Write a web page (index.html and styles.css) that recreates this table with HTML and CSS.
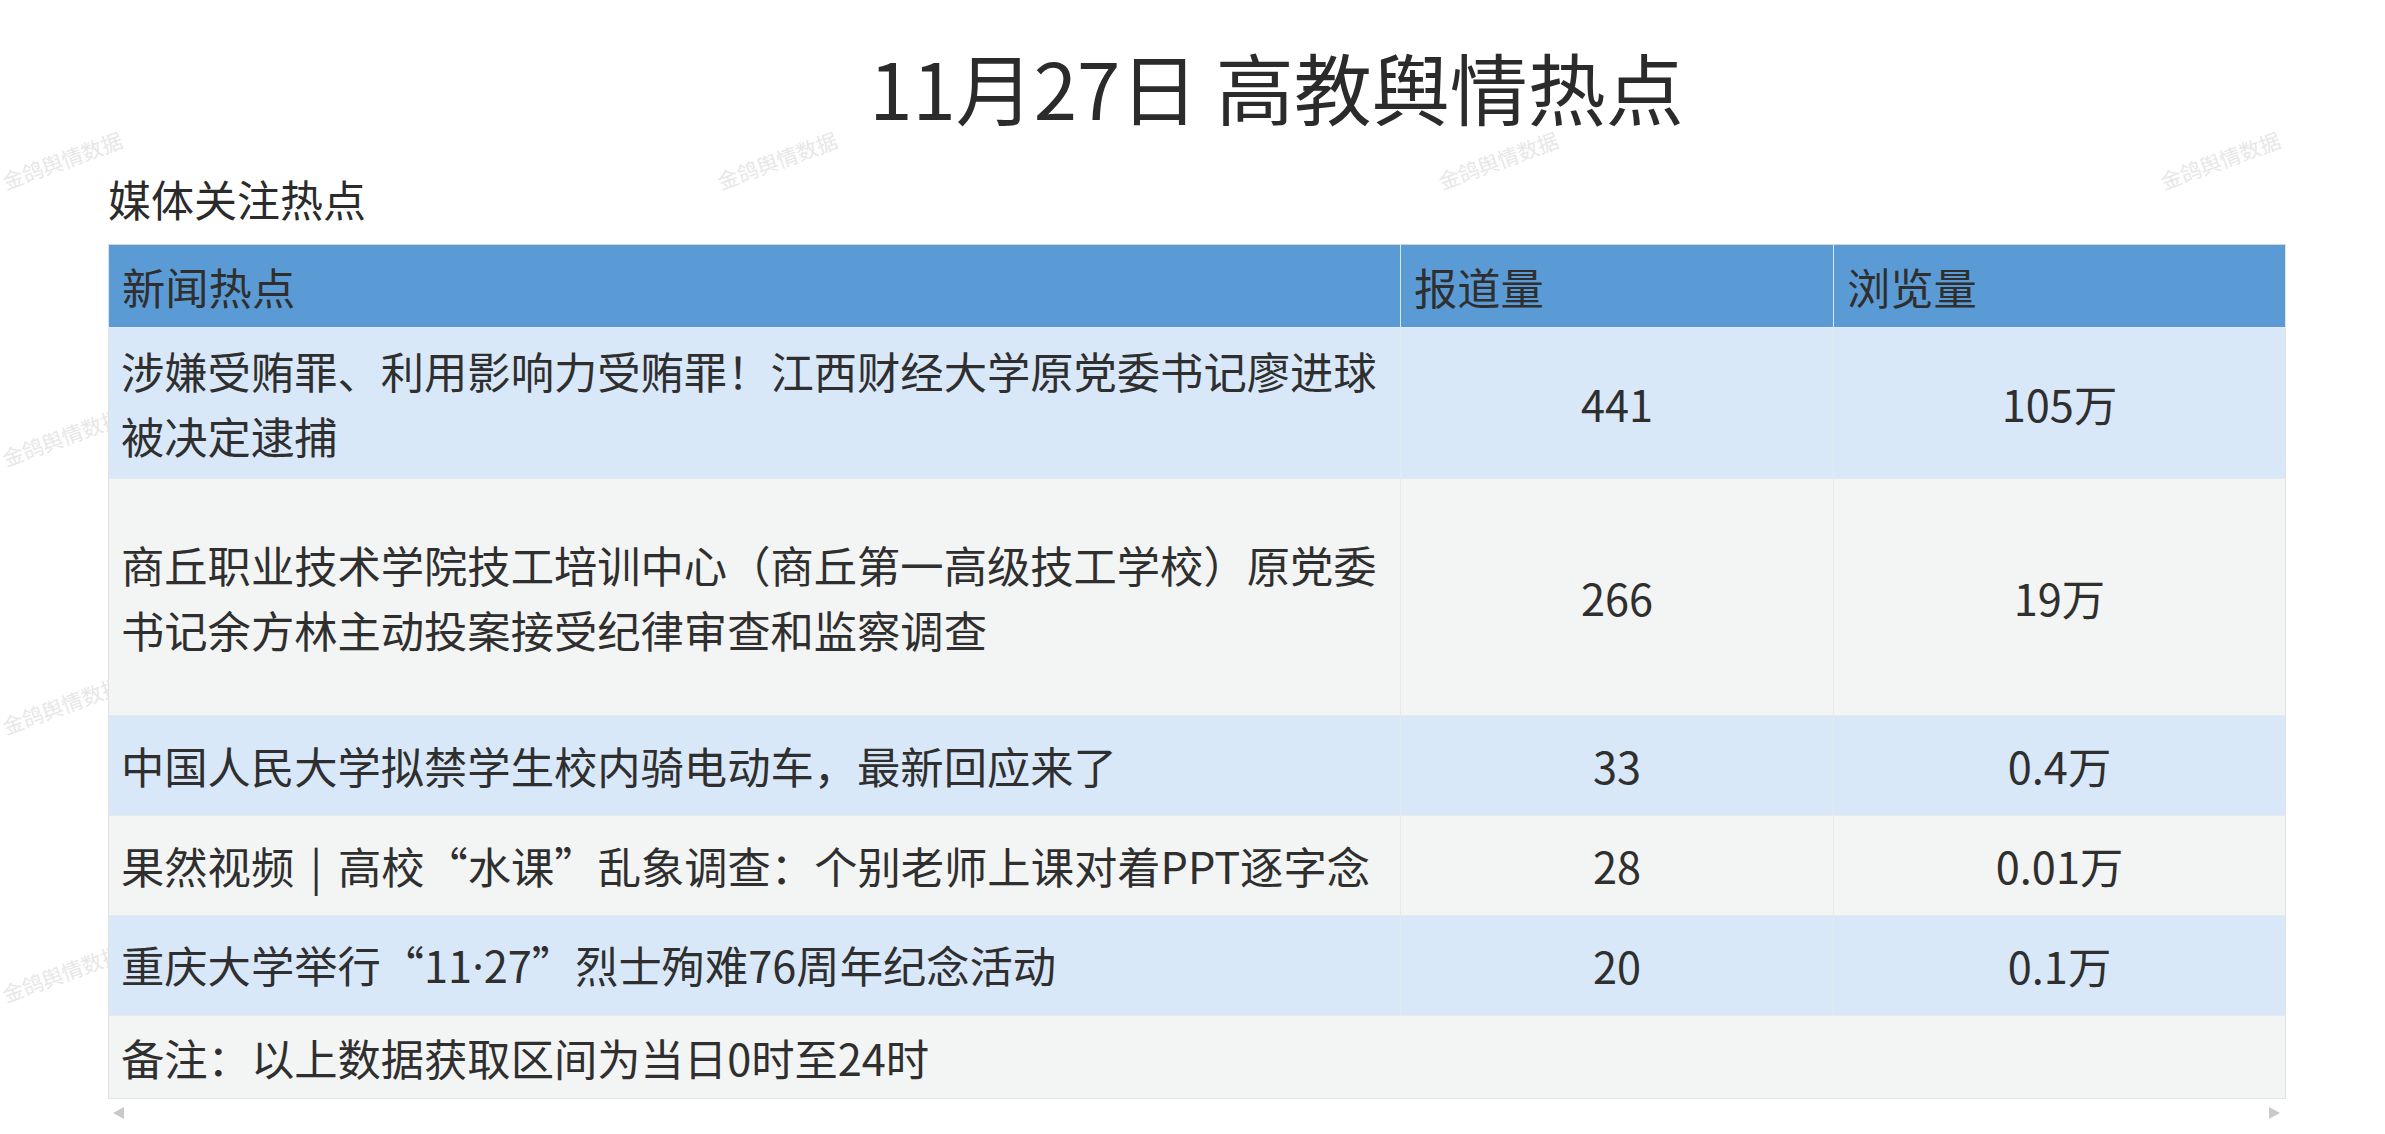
FILE: index.html
```html
<!DOCTYPE html>
<html lang="zh-CN">
<head>
<meta charset="utf-8">
<title>11月27日 高教舆情热点</title>
<link rel="stylesheet" href="styles.css">
</head>
<body>
<div class="watermarks" aria-hidden="true">
  <span class="wm wm-1">金鸽舆情数据</span>
  <span class="wm wm-2">金鸽舆情数据</span>
  <span class="wm wm-3">金鸽舆情数据</span>
  <span class="wm wm-4">金鸽舆情数据</span>
  <span class="wm wm-5">金鸽舆情数据</span>
  <span class="wm wm-6">金鸽舆情数据</span>
  <span class="wm wm-7">金鸽舆情数据</span>
</div>
<main class="page">
  <h1 class="title">11月27日 高教舆情热点</h1>
  <h2 class="subtitle">媒体关注热点</h2>
  <div class="scroller">
    <table class="hot">
      <colgroup>
        <col class="col-news">
        <col class="col-num1">
        <col class="col-num2">
      </colgroup>
      <thead>
        <tr>
          <th>新闻热点</th>
          <th>报道量</th>
          <th>浏览量</th>
        </tr>
      </thead>
      <tbody>
        <tr class="row-blue row-a">
          <td>涉嫌受贿罪、利用影响力受贿罪！江西财经大学原党委书记廖进球被决定逮捕</td>
          <td class="num">441</td>
          <td class="num">105万</td>
        </tr>
        <tr class="row-gray row-b">
          <td>商丘职业技术学院技工培训中心（商丘第一高级技工学校）原党委书记余方林主动投案接受纪律审查和监察调查</td>
          <td class="num">266</td>
          <td class="num">19万</td>
        </tr>
        <tr class="row-blue row-c">
          <td>中国人民大学拟禁学生校内骑电动车，最新回应来了</td>
          <td class="num">33</td>
          <td class="num">0.4万</td>
        </tr>
        <tr class="row-gray row-c">
          <td>果然视频<span class="bar">|</span>高校“水课”乱象调查：个别老师上课对着PPT逐字念</td>
          <td class="num">28</td>
          <td class="num">0.01万</td>
        </tr>
        <tr class="row-blue row-c">
          <td>重庆大学举行“11<span class="dot">·</span>27”烈士殉难76周年纪念活动</td>
          <td class="num">20</td>
          <td class="num">0.1万</td>
        </tr>
        <tr class="row-gray row-note">
          <td colspan="3">备注：以上数据获取区间为当日0时至24时</td>
        </tr>
      </tbody>
    </table>
    <div class="scrollbar">
      <span class="arrow arrow-left"></span>
      <span class="arrow arrow-right"></span>
    </div>
  </div>
</main>
</body>
</html>
```

FILE: styles.css
```css
html, body {
  margin: 0;
  padding: 0;
  background: #ffffff;
}

body {
  font-family: "Noto Sans CJK SC", "Noto Sans", "Liberation Sans", sans-serif;
  color: #333333;
  position: relative;
  min-height: 1134px;
  overflow: hidden;
}

/* watermark layer */
.watermarks {
  position: absolute;
  inset: 0;
  z-index: 0;
  pointer-events: none;
}

.wm {
  position: absolute;
  font-size: 21px;
  color: #e7e7e7;
  white-space: nowrap;
  transform: translate(-50%, -50%) rotate(-20deg);
}

.wm-1 { left: 62px;   top: 160px; }
.wm-2 { left: 777px;  top: 160px; }
.wm-3 { left: 1498px; top: 160px; }
.wm-4 { left: 2220px; top: 160px; }
.wm-5 { left: 62px;   top: 437px; }
.wm-6 { left: 62px;   top: 705px; }
.wm-7 { left: 62px;   top: 973px; }

/* page */
.page {
  position: relative;
  z-index: 1;
  padding: 0 100px 0 108px;
}

.title {
  margin: 0;
  padding: 47px 0 0 160px;
  font-size: 78px;
  line-height: 78px;
  font-weight: 400;
  text-align: center;
  color: #2b2b2b;
}

.subtitle {
  margin: 52px 0 24px;
  font-size: 43px;
  line-height: 43px;
  font-weight: 400;
  color: #2b2b2b;
}

/* table */
.hot {
  width: 2177px;
  border-collapse: collapse;
  table-layout: fixed;
  font-size: 43.3px;
  line-height: 1.5;
  border-left: 1px solid #e2e2e2;
  border-right: 1px solid #e2e2e2;
  border-bottom: 1px solid #e2e2e2;
}

.col-news { width: 1292px; }
.col-num1 { width: 433px; }
.col-num2 { width: 452px; }

.hot th {
  background: #5b9bd5;
  color: #2f2f2f;
  font-weight: 400;
  text-align: left;
  height: 82px;
  padding: 0 12px 0 13px;
  border-top: 1px solid #d6d6d6;
  border-left: 1px solid #dce7f2;
  vertical-align: middle;
}

.hot th:first-child {
  border-left: 1px solid #e2e2e2;
}

.hot td {
  padding: 0 12px;
  vertical-align: middle;
  border-left: 1px solid #e6eaee;
  border-top: 1px solid #e6eaee;
  color: #2f2f2f;
}

.hot td:first-child {
  border-left: 1px solid #e2e2e2;
}

.hot td.num {
  text-align: center;
}

.dot {
  font-family: "Noto Sans", "Liberation Sans", sans-serif;
}

.bar {
  display: inline-block;
  margin: 0 16px;
}

.row-blue td { background: #d9e8f9; }
.row-gray td { background: #f3f4f4; }

.row-a td { height: 150px; }
.row-b td { height: 236px; }
.row-c td { height: 99px; }
.row-note td { height: 82px; }

/* scrollbar arrows */
.scrollbar {
  width: 2177px;
  display: flex;
  justify-content: space-between;
  padding: 8px 5px 0;
  box-sizing: border-box;
}

.arrow {
  display: block;
  width: 0;
  height: 0;
  border-top: 6px solid transparent;
  border-bottom: 6px solid transparent;
}

.arrow-left {
  border-right: 11px solid #c9c9c9;
}

.arrow-right {
  border-left: 11px solid #c9c9c9;
}
```
